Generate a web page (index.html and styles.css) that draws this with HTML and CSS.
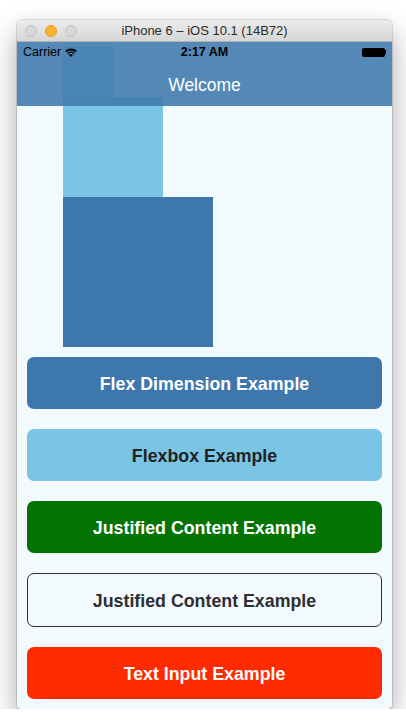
FILE: index.html
```html
<!DOCTYPE html>
<html lang="en">
<head>
    <meta charset="UTF-8">
    <meta name="viewport" content="width=device-width, initial-scale=1.0">
    <title>iPhone 6 – iOS 10.1 (14B72)</title>
    <link rel="stylesheet" href="styles.css">
</head>
<body>
    <div class="window">
        <!-- Barre de titre du simulateur -->
        <div class="titlebar">
            <div class="lights">
                <span class="light"></span>
                <span class="light light-min"></span>
                <span class="light"></span>
            </div>
            <span class="title">iPhone 6 – iOS 10.1 (14B72)</span>
        </div>

        <div class="screen">
            <div class="content">
                <div class="box box-small"></div>
                <div class="box box-medium"></div>
                <div class="box box-large"></div>

                <div class="buttons">
                    <button class="btn btn-steel">Flex Dimension Example</button>
                    <button class="btn btn-sky">Flexbox Example</button>
                    <button class="btn btn-green">Justified Content Example</button>
                    <button class="btn btn-outline">Justified Content Example</button>
                    <button class="btn btn-red">Text Input Example</button>
                </div>
            </div>

            <!-- Barre d'etat + barre de navigation (translucides) -->
            <div class="topbar">
                <div class="statusbar">
                    <div class="carrier">
                        Carrier
                        <svg class="wifi" width="12" height="9" viewBox="0 0 12 9">
                            <path d="M6 9 L0.2 2.8 A8.4 8.4 0 0 1 11.8 2.8 Z" fill="#000"/>
                            <path d="M1.9 4.6 A6 6 0 0 1 10.1 4.6" stroke="#5589b8" stroke-width="1.1" fill="none"/>
                            <path d="M3.6 6.4 A3.6 3.6 0 0 1 8.4 6.4" stroke="#5589b8" stroke-width="1.1" fill="none"/>
                        </svg>
                    </div>
                    <div class="time">2:17 AM</div>
                    <div class="battery">
                        <span class="battery-body"></span>
                        <span class="battery-nub"></span>
                    </div>
                </div>
                <div class="navbar">Welcome</div>
            </div>
        </div>
    </div>
</body>
</html>
```

FILE: styles.css
```css
body {
    margin: 0;
    background-color: #ffffff;
    font-family: "Liberation Sans", Arial, sans-serif;
}

.window {
    width: 375px;
    margin: 20px 0 0 17px;
    border-radius: 5px;
    overflow: hidden;
    box-shadow: 0 12px 28px rgba(0, 0, 0, 0.35), 0 0 0 1px rgba(0, 0, 0, 0.12);
}

/* Barre de titre */
.titlebar {
    position: relative;
    height: 22px;
    background: linear-gradient(#ececec, #d6d6d6);
    border-bottom: 1px solid #b4b4b4;
    box-sizing: border-box;
    display: flex;
    align-items: center;
    justify-content: center;
}

.lights {
    position: absolute;
    left: 8px;
    top: 5px;
    display: flex;
    gap: 8px;
}

.light {
    width: 12px;
    height: 12px;
    box-sizing: border-box;
    border-radius: 50%;
    background-color: #d8d8d8;
    border: 1px solid #c2c2c2;
}

.light-min {
    background-color: #f9b42f;
    border-color: #e09e22;
}

.title {
    font-size: 13px;
    color: #2a2a2a;
}

/* Ecran */
.screen {
    position: relative;
    height: 667px;
    background-color: #f3fafe;
}

.content {
    display: flex;
    flex-direction: column;
    padding-top: 5px;
}

.box {
    margin-left: 46px;
}

.box-small {
    width: 50px;
    height: 50px;
    background-color: #a2dbf7;
}

.box-medium {
    width: 100px;
    height: 100px;
    background-color: #7ac5e6;
}

.box-large {
    width: 150px;
    height: 150px;
    background-color: #3e77ac;
}

.buttons {
    display: flex;
    flex-direction: column;
    gap: 20px;
    padding: 10px 10px 0;
}

.btn {
    height: 52px;
    border: none;
    border-radius: 7px;
    font-family: "Liberation Sans", Arial, sans-serif;
    font-size: 17.8px;
    font-weight: bold;
    color: #ffffff;
    padding: 3px 0 0;
}

.btn-steel {
    background-color: #3e77ac;
}

.btn-sky {
    background-color: #7ac5e6;
    color: #222222;
}

.btn-green {
    background-color: #037303;
}

.btn-outline {
    background-color: transparent;
    border: 1px solid #2e2e32;
    color: #2e2e32;
    height: 54px;
}

.btn-red {
    background-color: #ff2a00;
}

/* Barres du haut */
.topbar {
    position: absolute;
    top: 0;
    left: 0;
    right: 0;
    height: 64px;
    background-color: rgba(62, 119, 172, 0.88);
}

.statusbar {
    position: relative;
    height: 20px;
    display: flex;
    align-items: center;
    justify-content: space-between;
    padding: 0 6px;
    font-size: 12.5px;
    color: #000000;
}

.carrier {
    display: flex;
    align-items: center;
    gap: 4px;
}

.time {
    position: absolute;
    left: 0;
    right: 0;
    text-align: center;
    font-weight: bold;
}

.battery {
    display: flex;
    align-items: center;
}

.battery-body {
    width: 23px;
    height: 9px;
    border-radius: 2px;
    background-color: #000000;
}

.battery-nub {
    width: 1.5px;
    height: 4px;
    background-color: #000000;
}

.navbar {
    height: 44px;
    display: flex;
    align-items: center;
    justify-content: center;
    padding-top: 2px;
    box-sizing: border-box;
    font-size: 17.5px;
    color: #ffffff;
}
```
